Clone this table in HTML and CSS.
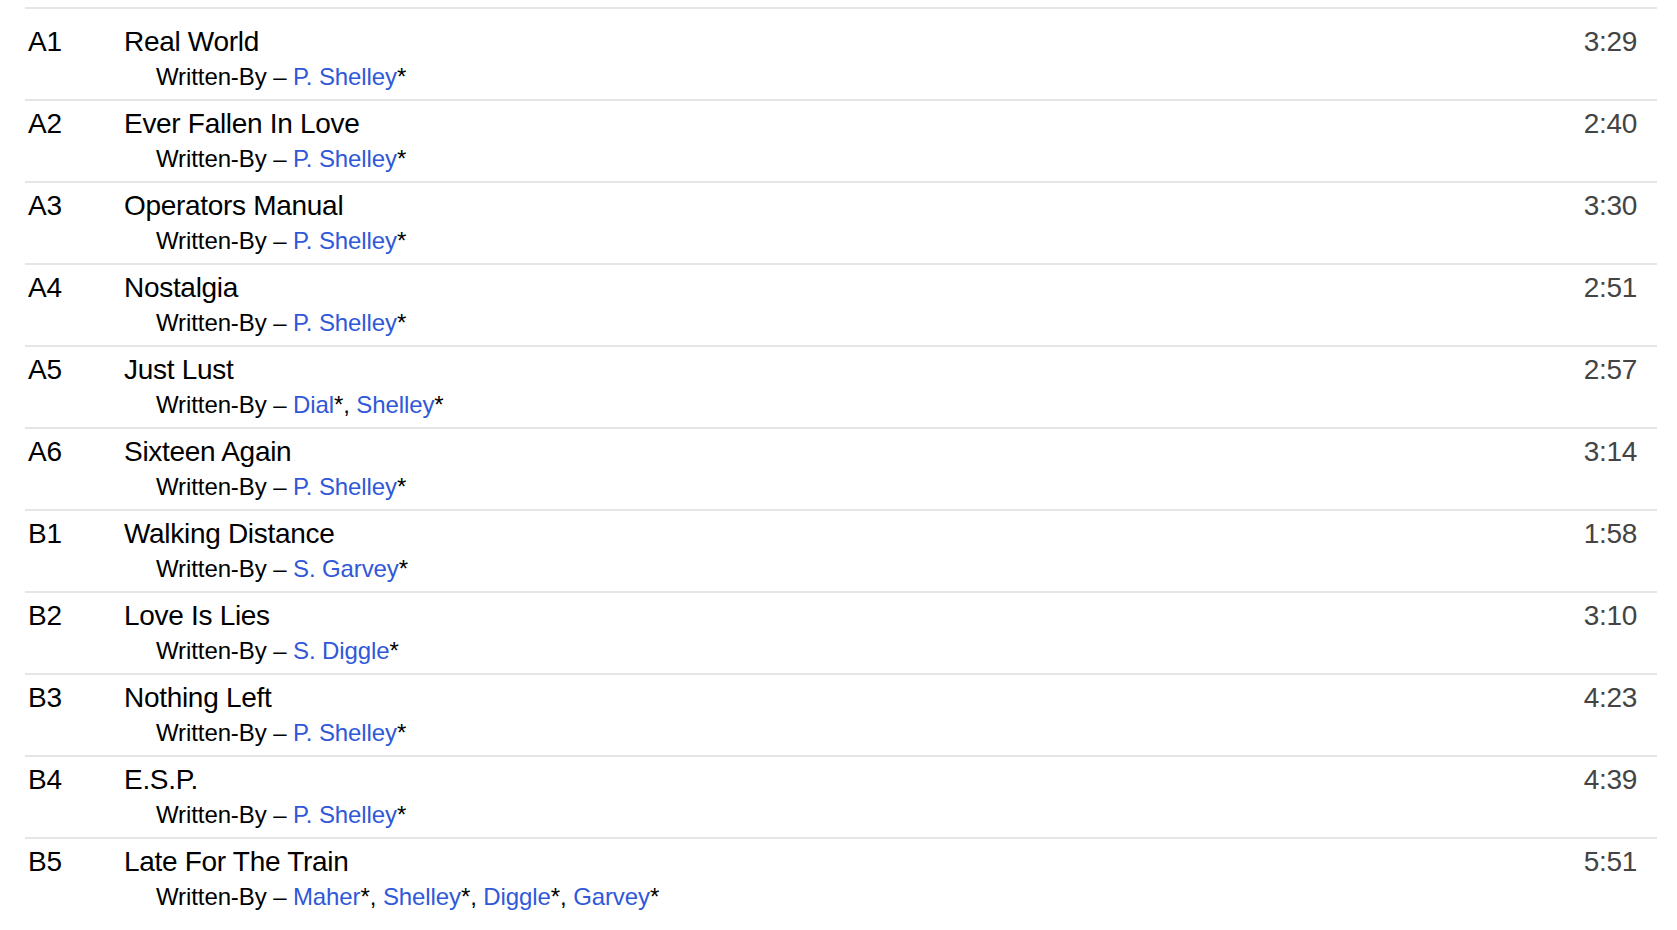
FILE: index.html
```html
<!DOCTYPE html>
<html lang="en">
<head>
    <meta charset="UTF-8">
    <meta name="viewport" content="width=device-width, initial-scale=1.0">
    <title>Tracklist</title>
    <link rel="stylesheet" href="styles.css">
</head>
<body>
<div class="tracklist">
    <div class="track">
        <span class="pos">A1</span>
        <div class="info">
            <span class="title">Real World</span>
            <div class="credits">Written-By – <a href="#">P. Shelley</a>*</div>
        </div>
        <span class="duration">3:29</span>
    </div>
    <div class="track">
        <span class="pos">A2</span>
        <div class="info">
            <span class="title">Ever Fallen In Love</span>
            <div class="credits">Written-By – <a href="#">P. Shelley</a>*</div>
        </div>
        <span class="duration">2:40</span>
    </div>
    <div class="track">
        <span class="pos">A3</span>
        <div class="info">
            <span class="title">Operators Manual</span>
            <div class="credits">Written-By – <a href="#">P. Shelley</a>*</div>
        </div>
        <span class="duration">3:30</span>
    </div>
    <div class="track">
        <span class="pos">A4</span>
        <div class="info">
            <span class="title">Nostalgia</span>
            <div class="credits">Written-By – <a href="#">P. Shelley</a>*</div>
        </div>
        <span class="duration">2:51</span>
    </div>
    <div class="track">
        <span class="pos">A5</span>
        <div class="info">
            <span class="title">Just Lust</span>
            <div class="credits">Written-By – <a href="#">Dial</a>*, <a href="#">Shelley</a>*</div>
        </div>
        <span class="duration">2:57</span>
    </div>
    <div class="track">
        <span class="pos">A6</span>
        <div class="info">
            <span class="title">Sixteen Again</span>
            <div class="credits">Written-By – <a href="#">P. Shelley</a>*</div>
        </div>
        <span class="duration">3:14</span>
    </div>
    <div class="track">
        <span class="pos">B1</span>
        <div class="info">
            <span class="title">Walking Distance</span>
            <div class="credits">Written-By – <a href="#">S. Garvey</a>*</div>
        </div>
        <span class="duration">1:58</span>
    </div>
    <div class="track">
        <span class="pos">B2</span>
        <div class="info">
            <span class="title">Love Is Lies</span>
            <div class="credits">Written-By – <a href="#">S. Diggle</a>*</div>
        </div>
        <span class="duration">3:10</span>
    </div>
    <div class="track">
        <span class="pos">B3</span>
        <div class="info">
            <span class="title">Nothing Left</span>
            <div class="credits">Written-By – <a href="#">P. Shelley</a>*</div>
        </div>
        <span class="duration">4:23</span>
    </div>
    <div class="track">
        <span class="pos">B4</span>
        <div class="info">
            <span class="title">E.S.P.</span>
            <div class="credits">Written-By – <a href="#">P. Shelley</a>*</div>
        </div>
        <span class="duration">4:39</span>
    </div>
    <div class="track">
        <span class="pos">B5</span>
        <div class="info">
            <span class="title">Late For The Train</span>
            <div class="credits">Written-By – <a href="#">Maher</a>*, <a href="#">Shelley</a>*, <a href="#">Diggle</a>*, <a href="#">Garvey</a>*</div>
        </div>
        <span class="duration">5:51</span>
    </div>
</div>
</body>
</html>
```

FILE: styles.css
```css
body {
    font-family: "Liberation Sans", Arial, sans-serif;
    background-color: #fff;
    color: #000;
    margin: 0;
    padding: 0;
}
.tracklist {
    width: 1632px;
    margin: 7px 0 0 25px;
    padding-top: 10px;
    border-top: 2px solid #e5e5e5;
}
.track {
    display: grid;
    grid-template-columns: 96px 1fr auto;
    height: 82px;
    padding: 6px 20px 0 3px;
    box-sizing: border-box;
    border-bottom: 2px solid #e5e5e5;
    letter-spacing: -0.3px;
}
.track:last-child {
    border-bottom: none;
}
.pos, .title, .duration {
    font-size: 28px;
    line-height: 34px;
}
.title {
    display: block;
}
.duration {
    color: #444;
    text-align: right;
}
.credits {
    font-size: 24px;
    line-height: 30px;
    margin-top: 3px;
    padding-left: 32px;
    letter-spacing: -0.1px;
}
.credits a {
    color: #3058d8;
    text-decoration: none;
}
```
